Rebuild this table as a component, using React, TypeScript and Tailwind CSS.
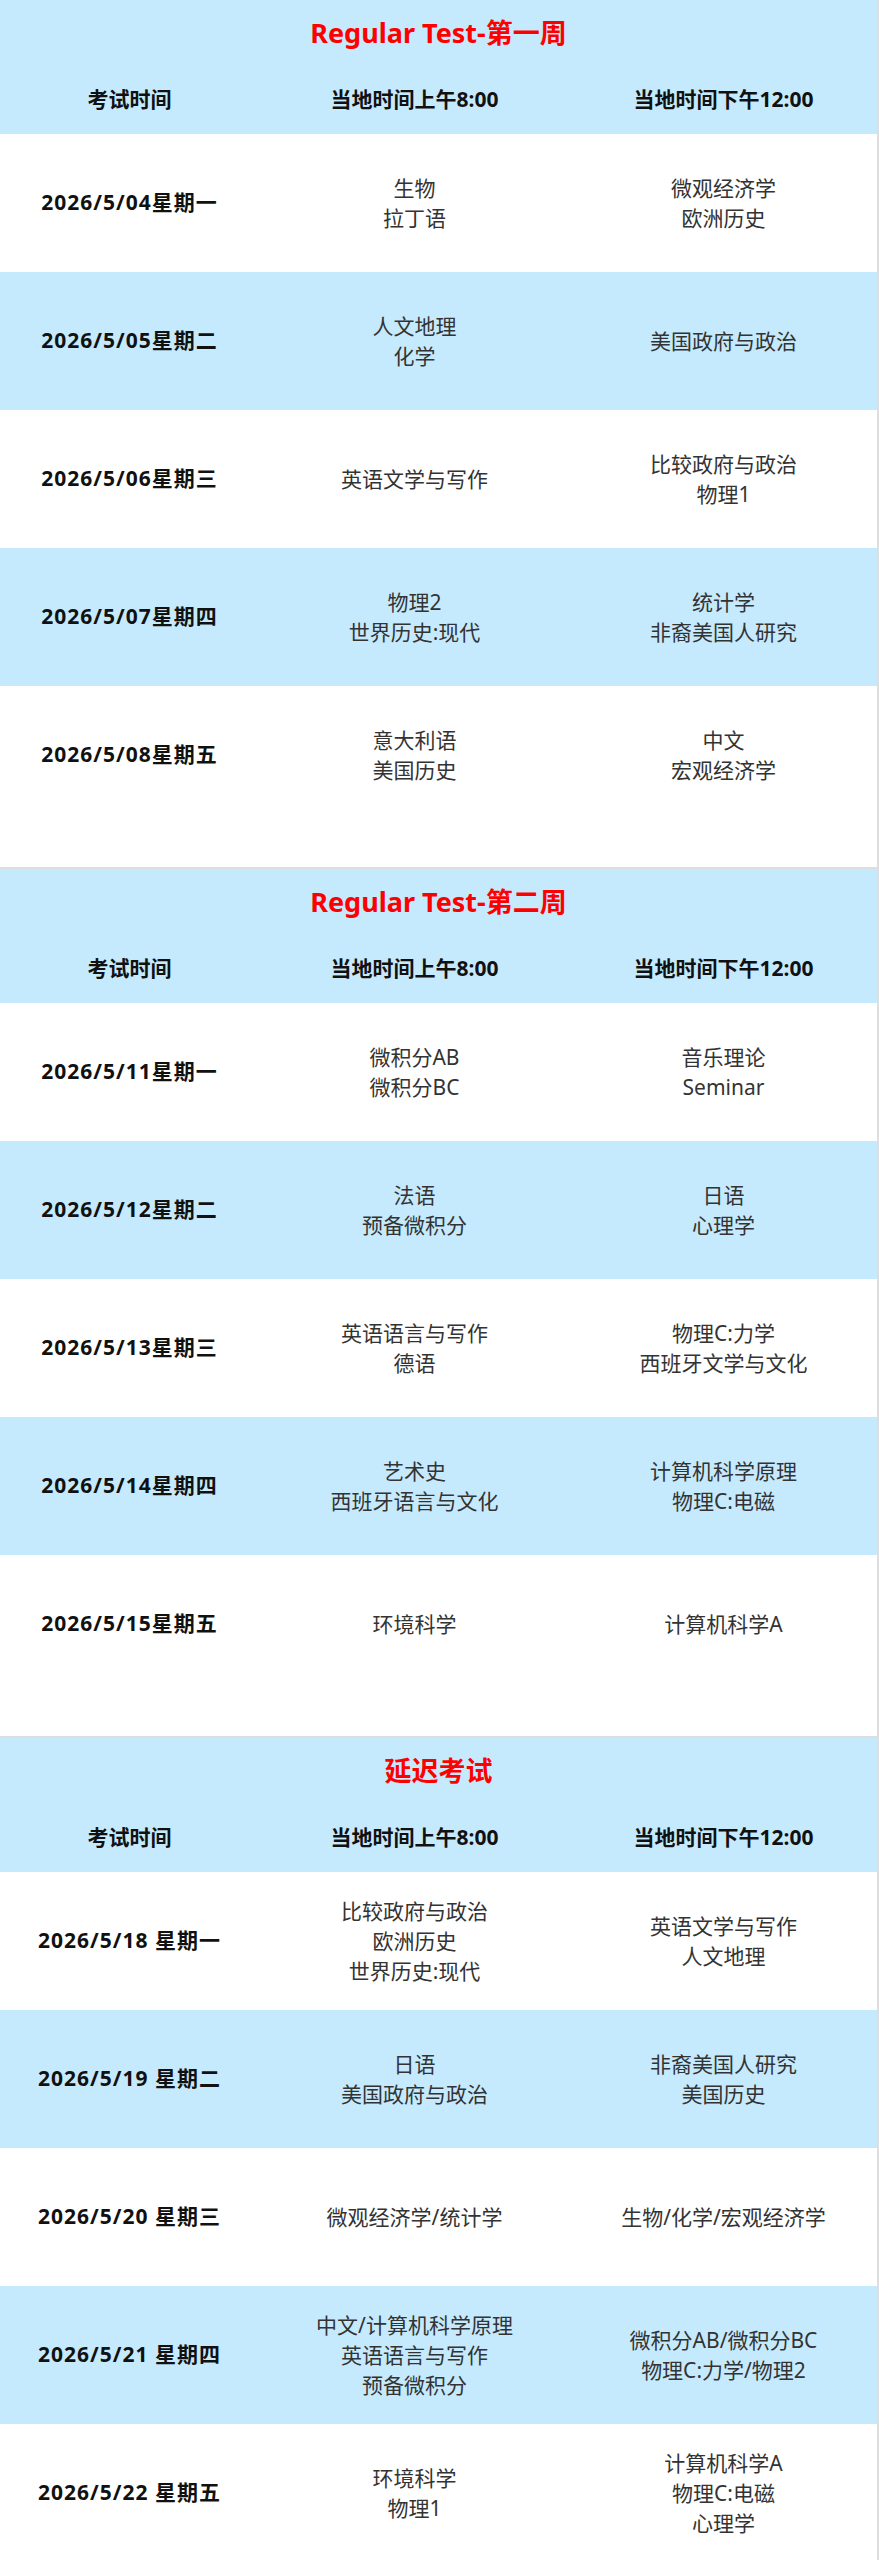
const BLUE = "bg-[#c6eafd]";

type Row = { date: string; am: string[]; pm: string[] };
type Section = { title: string; rows: Row[]; tall: boolean };

const SECTIONS: Section[] = [
  {
    title: "Regular Test-第一周",
    tall: true,
    rows: [
      { date: "2026/5/04星期一", am: ["生物", "拉丁语"], pm: ["微观经济学", "欧洲历史"] },
      { date: "2026/5/05星期二", am: ["人文地理", "化学"], pm: ["美国政府与政治"] },
      { date: "2026/5/06星期三", am: ["英语文学与写作"], pm: ["比较政府与政治", "物理1"] },
      { date: "2026/5/07星期四", am: ["物理2", "世界历史:现代"], pm: ["统计学", "非裔美国人研究"] },
      { date: "2026/5/08星期五", am: ["意大利语", "美国历史"], pm: ["中文", "宏观经济学"] },
    ],
  },
  {
    title: "Regular Test-第二周",
    tall: true,
    rows: [
      { date: "2026/5/11星期一", am: ["微积分AB", "微积分BC"], pm: ["音乐理论", "Seminar"] },
      { date: "2026/5/12星期二", am: ["法语", "预备微积分"], pm: ["日语", "心理学"] },
      { date: "2026/5/13星期三", am: ["英语语言与写作", "德语"], pm: ["物理C:力学", "西班牙文学与文化"] },
      { date: "2026/5/14星期四", am: ["艺术史", "西班牙语言与文化"], pm: ["计算机科学原理", "物理C:电磁"] },
      { date: "2026/5/15星期五", am: ["环境科学"], pm: ["计算机科学A"] },
    ],
  },
  {
    title: "延迟考试",
    tall: false,
    rows: [
      { date: "2026/5/18 星期一", am: ["比较政府与政治", "欧洲历史", "世界历史:现代"], pm: ["英语文学与写作", "人文地理"] },
      { date: "2026/5/19 星期二", am: ["日语", "美国政府与政治"], pm: ["非裔美国人研究", "美国历史"] },
      { date: "2026/5/20 星期三", am: ["微观经济学/统计学"], pm: ["生物/化学/宏观经济学"] },
      { date: "2026/5/21 星期四", am: ["中文/计算机科学原理", "英语语言与写作", "预备微积分"], pm: ["微积分AB/微积分BC", "物理C:力学/物理2"] },
      { date: "2026/5/22 星期五", am: ["环境科学", "物理1"], pm: ["计算机科学A", "物理C:电磁", "心理学"] },
    ],
  },
];

const GRID = "grid grid-cols-[259px_311px_1fr] items-center text-center";

function Lines({ items }: { items: string[] }) {
  return (
    <div className="flex flex-col items-center text-[21px] leading-[30px] text-[#333]">
      {items.map((t) => (
        <span key={t}>{t}</span>
      ))}
    </div>
  );
}

function ScheduleSection({ section }: { section: Section }) {
  return (
    <div className="border-b-2 border-[#dedede]">
      {/* title + column header */}
      <div className={BLUE}>
        <div className="h-[66px] flex items-center justify-center text-[27px] font-bold text-[#ff0000]">
          {section.title}
        </div>
        <div className={`${GRID} h-[68px] text-[21px] font-bold text-[#111]`}>
          <div>考试时间</div>
          <div>当地时间上午8:00</div>
          <div>当地时间下午12:00</div>
        </div>
      </div>

      {section.rows.map((r, i) => {
        const last = i === section.rows.length - 1;
        return (
          <div
            key={r.date}
            className={`${i % 2 === 1 ? BLUE : "bg-white"} ${last && section.tall ? "pb-[43px]" : ""}`}
          >
            <div className={`${GRID} h-[138px]`}>
              <div className="text-[21px] font-bold tracking-[1px] text-[#111]">{r.date}</div>
              <Lines items={r.am} />
              <Lines items={r.pm} />
            </div>
          </div>
        );
      })}
    </div>
  );
}

export default function App() {
  return (
    <div
      className="w-[879px] bg-white border-r-2 border-[#dedede]"
      style={{ fontFamily: '"Noto Sans", "Noto Sans CJK SC", sans-serif' }}
    >
      {SECTIONS.map((s) => (
        <ScheduleSection key={s.title} section={s} />
      ))}
    </div>
  );
}
